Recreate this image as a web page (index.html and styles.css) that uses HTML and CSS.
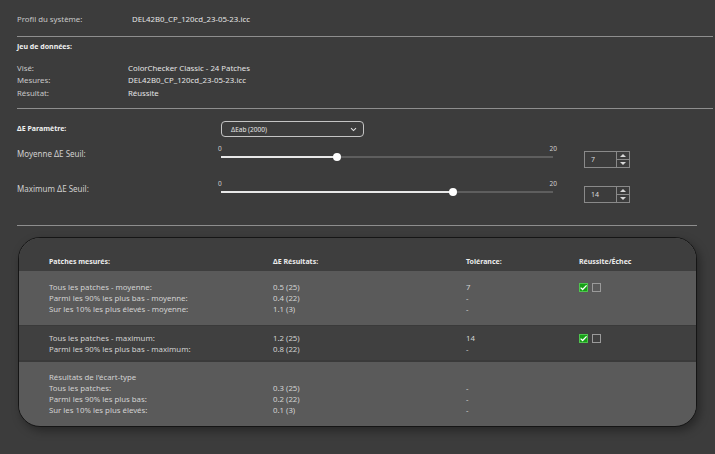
FILE: index.html
```html
<!DOCTYPE html>
<html lang="fr">
<head>
<meta charset="utf-8">
<title>Profil</title>
<link rel="stylesheet" href="styles.css">
</head>
<body>
<div class="page">
  <div class="profile">
    <span class="profile-label">Profil du système:</span>
    <span class="val">DEL42B0_CP_120cd_23-05-23.icc</span>
  </div>

  <div class="dataset">
    <div class="heading">Jeu de données:</div>
    <div class="kv"><span class="k">Visé:</span><span class="val">ColorChecker Classic - 24 Patches</span></div>
    <div class="kv"><span class="k">Mesures:</span><span class="val">DEL42B0_CP_120cd_23-05-23.icc</span></div>
    <div class="kv"><span class="k">Résultat:</span><span class="val">Réussite</span></div>
  </div>

  <div class="params">
    <div class="param-row">
      <span class="heading param-label">ΔE Paramètre:</span>
      <div class="dropdown">
        <span>ΔEab (2000)</span>
        <svg class="chev" width="7" height="5" viewBox="0 0 7 5"><path d="M1 1.2 L3.5 3.6 L6 1.2" fill="none" stroke="#e0e0e0" stroke-width="1.1"/></svg>
      </div>
    </div>

    <div class="slider-row">
      <span class="slider-label">Moyenne ΔE Seuil:</span>
      <div class="slider">
        <div class="ticks"><span>0</span><span>20</span></div>
        <div class="track">
          <div class="fill" style="width:35%"></div>
          <div class="thumb" style="left:35%"></div>
        </div>
      </div>
      <div class="spin">
        <span class="spin-val">7</span>
        <div class="spin-btns">
          <div class="spin-btn"><i class="up"></i></div>
          <div class="spin-btn"><i class="down"></i></div>
        </div>
      </div>
    </div>

    <div class="slider-row">
      <span class="slider-label">Maximum ΔE Seuil:</span>
      <div class="slider">
        <div class="ticks"><span>0</span><span>20</span></div>
        <div class="track">
          <div class="fill" style="width:70%"></div>
          <div class="thumb" style="left:70%"></div>
        </div>
      </div>
      <div class="spin">
        <span class="spin-val">14</span>
        <div class="spin-btns">
          <div class="spin-btn"><i class="up"></i></div>
          <div class="spin-btn"><i class="down"></i></div>
        </div>
      </div>
    </div>
  </div>

  <div class="card">
    <div class="trow thead">
      <div>Patches mesurés:</div>
      <div>ΔE Résultats:</div>
      <div>Tolérance:</div>
      <div>Réussite/Échec</div>
    </div>
    <div class="trow light r1">
      <div><p>Tous les patches - moyenne:</p><p>Parmi les 90% les plus bas - moyenne:</p><p>Sur les 10% les plus élevés - moyenne:</p></div>
      <div><p>0.5 (25)</p><p>0.4 (22)</p><p>1.1 (3)</p></div>
      <div><p>7</p><p>-</p><p>-</p></div>
      <div><p class="checks"><span class="cb on"><svg width="9" height="9" viewBox="0 0 9 9"><path d="M1.6 4.6 L3.6 6.5 L7.6 2.4" fill="none" stroke="#fff" stroke-width="1.3"/></svg></span><span class="cb"></span></p></div>
    </div>
    <div class="trow dark r2">
      <div><p>Tous les patches - maximum:</p><p>Parmi les 90% les plus bas - maximum:</p></div>
      <div><p>1.2 (25)</p><p>0.8 (22)</p></div>
      <div><p>14</p><p>-</p></div>
      <div><p class="checks"><span class="cb on"><svg width="9" height="9" viewBox="0 0 9 9"><path d="M1.6 4.6 L3.6 6.5 L7.6 2.4" fill="none" stroke="#fff" stroke-width="1.3"/></svg></span><span class="cb"></span></p></div>
    </div>
    <div class="trow light r3">
      <div><p>Résultats de l'écart-type</p><p>Tous les patches:</p><p>Parmi les 90% les plus bas:</p><p>Sur les 10% les plus élevés:</p></div>
      <div><p>&nbsp;</p><p>0.3 (25)</p><p>0.2 (22)</p><p>0.1 (3)</p></div>
      <div><p>&nbsp;</p><p>-</p><p>-</p><p>-</p></div>
      <div></div>
    </div>
  </div>
</div>
</body>
</html>
```

FILE: styles.css
```css
* { box-sizing: border-box; }
html, body { margin: 0; padding: 0; }
body {
  background: #3c3c3c;
  color: #d4d4d4;
  font-family: "Noto Sans", "Open Sans", sans-serif;
  width: 715px;
  height: 454px;
  overflow: hidden;
}
p { margin: 0; }
.page { padding-left: 17px; padding-right: 2px; }

.val { color: #e4e4e4; }

.profile {
  height: 37px;
  padding-top: 2px;
  display: flex;
  align-items: center;
  font-size: 7.8px;
  border-bottom: 1px solid #8e8e8e;
}
.profile-label { width: 115px; color: #c8c8c8; }

.heading { font-weight: 700; font-size: 7px; color: #f0f0f0; line-height: 12px; }

.dataset {
  padding-top: 4px;
  padding-bottom: 8.75px;
  border-bottom: 1px solid #8e8e8e;
  font-size: 7.8px;
}
.dataset .heading { margin-bottom: 8.75px; }
.kv { display: flex; line-height: 12.5px; }
.k { width: 111px; color: #c8c8c8; }

.params {
  margin-right: 16px;
  padding-top: 12px;
  padding-bottom: 18px;
  border-bottom: 1px solid #8e8e8e;
}
.param-row { display: flex; align-items: center; height: 16px; }
.param-label { width: 204px; }
.dropdown {
  width: 143px;
  height: 16px;
  border: 1px solid #c4c4c4;
  border-radius: 4px;
  display: flex;
  align-items: center;
  justify-content: space-between;
  padding: 0 6px 0 9px;
  font-size: 6.5px;
  color: #e6e6e6;
}
.chev { display: block; }

.slider-row { display: flex; height: 35px; padding-top: 4px; }
.slider-label { width: 201px; margin-top: 7px; line-height: 12px; font-size: 8px; color: #cfcfcf; }
.slider { width: 339px; margin-top: 2.5px; }
.ticks {
  display: flex;
  justify-content: space-between;
  font-size: 6.5px;
  line-height: 9px;
  color: #cfcfcf;
}
.track {
  position: relative;
  margin: 0.5px 4px 0 3px;
  height: 8px;
}
.track::before {
  content: "";
  position: absolute;
  left: 0; right: 0; top: 3px;
  height: 2px;
  background: #5e5e5e;
}
.fill {
  position: absolute;
  left: 0; top: 3px;
  height: 2px;
  background: #e8e8e8;
}
.thumb {
  position: absolute;
  top: 0;
  width: 8px; height: 8px;
  border-radius: 50%;
  background: #ffffff;
  margin-left: -4px;
}

.spin {
  margin-left: 27px;
  margin-top: 10px;
  width: 46px;
  height: 17px;
  border: 1px solid #8a8a8a;
  display: flex;
}
.spin-val { flex: 1; padding-left: 6px; font-size: 7px; line-height: 15px; color: #dadada; }
.spin-btns { width: 13px; border-left: 1px solid #8a8a8a; display: flex; flex-direction: column; }
.spin-btn { flex: 1; display: flex; align-items: center; justify-content: center; }
.spin-btn + .spin-btn { border-top: 1px solid #8a8a8a; }
.spin-btn i { width: 0; height: 0; border-left: 3px solid transparent; border-right: 3px solid transparent; }
.spin-btn i.up { border-bottom: 3px solid #d8d8d8; }
.spin-btn i.down { border-top: 3px solid #d8d8d8; }

.card {
  margin: 11px 16px 0 1px;
  height: 190px;
  border: 1px solid #151515;
  border-radius: 22px;
  overflow: hidden;
  background: #5a5a5a;
  box-shadow: 3px 4px 10px rgba(0,0,0,0.35);
}
.trow {
  display: grid;
  grid-template-columns: 224px 193px 113px 1fr;
  padding-left: 30px;
  font-size: 7.8px;
  line-height: 11px;
  color: #d2d2d2;
}
.thead {
  background: #3e3e3e;
  height: 33px;
  padding-top: 18px;
  font-weight: 700;
  font-size: 7px;
  color: #ececec;
}
.light { background: #5a5a5a; }
.dark { background: #404040; border-top: 1px solid #3a3a3a; }
.r1 { height: 54px; padding-top: 11px; }
.r2 { height: 35px; padding-top: 6.5px; }
.r3 { padding-top: 9.5px; border-top: 2px solid #3a3a3a; }

.checks { display: flex; gap: 4px; align-items: center; height: 11px; }
.cb { width: 9px; height: 9px; border: 1px solid #9a9a9a; display: block; }
.cb.on { background: #16a016; border-color: #4ec44e; display: flex; align-items: center; justify-content: center; }
.cb.on svg { display: block; margin: -1px; }
```
